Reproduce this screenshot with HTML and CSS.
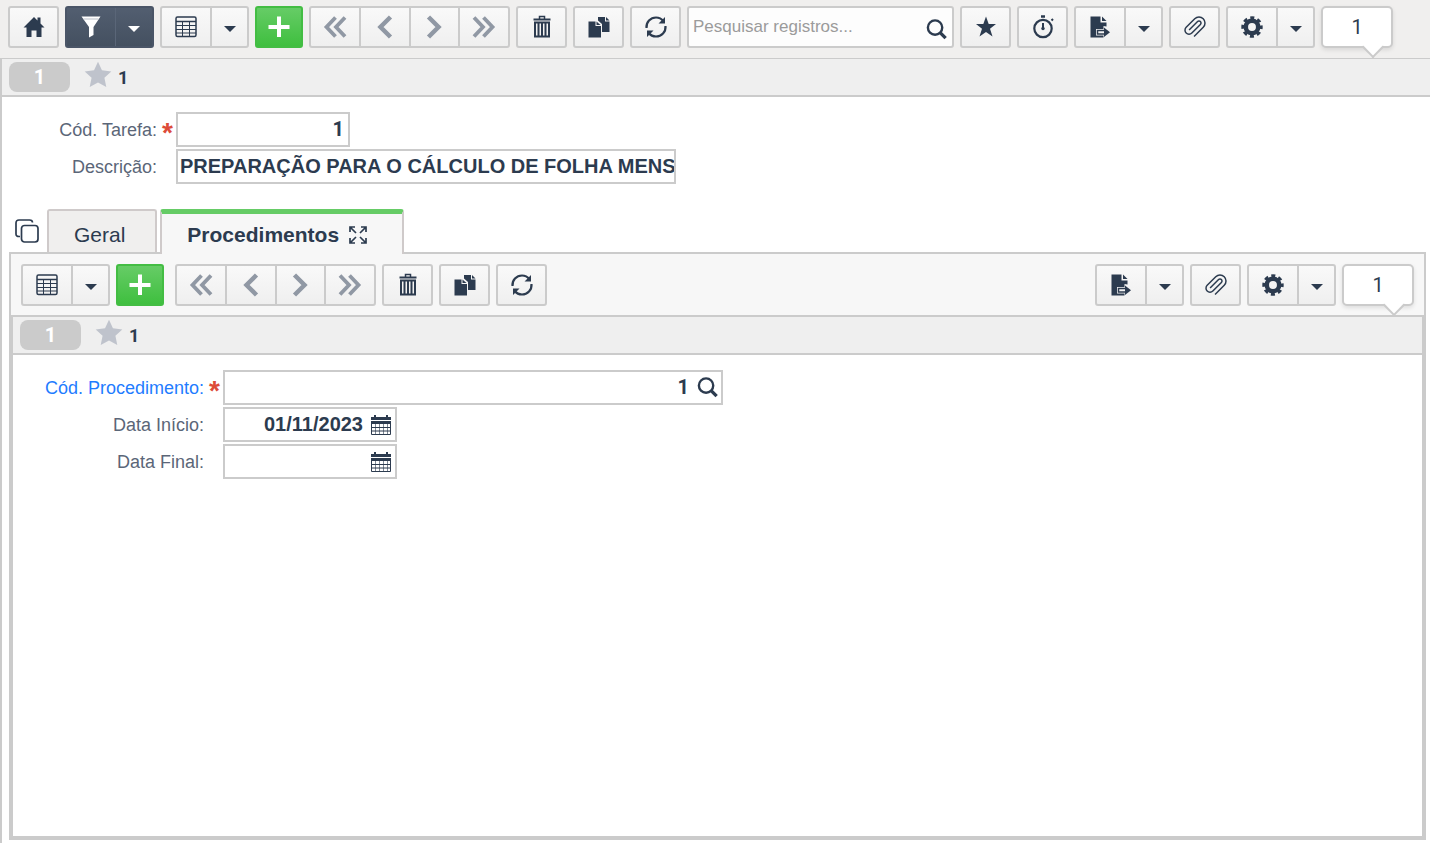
FILE: index.html
```html
<!DOCTYPE html>
<html lang="pt-BR">
  <head>
    <meta charset="UTF-8" />
    <meta name="viewport" content="width=device-width, initial-scale=1.0" />
    <title>Tarefas</title>
    <link rel="stylesheet" href="styles.css">
  </head>
  <body>
    <svg class="sprite" aria-hidden="true">
      <symbol id="i-home" viewBox="0 0 24 24">
        <path fill="currentColor" d="M12 2 1.500 12.500h3V22h5v-6.500h5V22h5v-9.500h3L18.500 8.500V2.500h-3v3z" />
      </symbol>
      <symbol id="i-filter" viewBox="0 0 24 24">
        <path fill="currentColor" d="M2.500 1.500h19L14.500 12v8l-4.500 2.500V12z" />
        <path stroke="#b9bfc8" d="M4.500 4h15" />
      </symbol>
      <symbol id="i-grid" viewBox="0 0 24 24" fill="none" stroke="currentColor">
        <rect x="2" y="2" width="20" height="19.500" rx="1.500" stroke-width="1.500" />
        <path stroke-width="1.500" d="M2 6.500h20" />
        <path d="M2 10.500h20M2 14.500h20M2 18h20M8.500 7v14M15.500 7v14" />
      </symbol>
      <symbol id="i-caret" viewBox="0 0 12 6">
        <path fill="currentColor" d="M0 0h12L6 6z" />
      </symbol>
      <symbol id="i-plus" viewBox="0 0 24 24">
        <path stroke="currentColor" stroke-width="4" d="M12 1.500v20.500M1.500 12h21" />
      </symbol>
      <symbol id="i-first" viewBox="0 0 24 24" fill="none" stroke="currentColor" stroke-width="3.800">
        <path d="M12.500 2.500 3.500 12l9 9.500M22 2.500 13 12l9 9.500" />
      </symbol>
      <symbol id="i-prev" viewBox="0 0 24 24" fill="none" stroke="currentColor" stroke-width="4.500">
        <path d="M17.500 2 7.500 12l10 10" />
      </symbol>
      <symbol id="i-next" viewBox="0 0 24 24" fill="none" stroke="currentColor" stroke-width="4.500">
        <path d="m6.500 2 10 10-10 10" />
      </symbol>
      <symbol id="i-last" viewBox="0 0 24 24" fill="none" stroke="currentColor" stroke-width="3.800">
        <path d="M2 2.500 11 12l-9 9.500M11.500 2.500l9 9.500-9 9.500" />
      </symbol>
      <symbol id="i-trash" viewBox="0 0 24 24" fill="none" stroke="currentColor">
        <path stroke-width="1.500" d="M9.500 4V1.500h5V4" />
        <path stroke-width="2" d="M3.500 4.500h17" />
        <path stroke-width="2" d="M5 7.500h14v14H5z" />
        <path stroke-width="2" d="M8.500 8v13M12 8v13M15.500 8v13" />
      </symbol>
      <symbol id="i-copy" viewBox="0 0 24 24" fill="currentColor">
        <path d="M11 2h7v4.500h4.500V17H15V9l-4-3.500z" />
        <path d="M19 2l3.500 3.500H19z" />
        <path d="M1.500 6.500h7V11H14v11.500H1.500z" />
        <path d="M9.500 6.500 13.500 10h-4z" />
      </symbol>
      <symbol id="i-refresh" viewBox="0 0 24 24" fill="none" stroke="currentColor" stroke-width="2.200">
        <path d="M2.500 13C2 7 6.500 2.500 12 2.500c3 0 5.500 1.200 7.200 3.500M21.500 11c.5 6-4 10.500-9.500 10.500-3 0-5.500-1.200-7.200-3.500" />
        <path fill="currentColor" stroke="none" d="M21 2v6.500h-6.500zM3 22v-6.500h6.500z" />
      </symbol>
      <symbol id="i-search" viewBox="0 0 24 24" fill="none" stroke="currentColor">
        <circle cx="10.500" cy="10" r="7.500" stroke-width="2.500" />
        <path stroke-width="3.500" d="m15.500 15 6 6" />
      </symbol>
      <symbol id="i-star" viewBox="0 0 24 24">
        <path fill="currentColor" d="m12 1.500 2.700 7.500H22l-6 4.800 2.500 7.700-6.500-4.500-6.500 4.500L8 13.800 2 9h7.300z" />
      </symbol>
      <symbol id="i-star-wide" viewBox="0 0 24 24">
        <path fill="currentColor" d="m12 .6 3.400 7.400 8 .9-5.900 5.500 1.600 7.900-7.100-3.900-7.100 3.900 1.600-7.900L.6 8.900l8-.9z" />
      </symbol>
      <symbol id="i-timer" viewBox="0 0 24 24" fill="none" stroke="currentColor">
        <circle cx="12" cy="13.500" r="8.700" stroke-width="2.200" />
        <path stroke-width="2.500" d="M10 1.500h4" />
        <path stroke-width="2" d="M12 8v6M20.500 5.500 22 4" />
        <circle cx="12" cy="13.500" r="1.700" fill="currentColor" stroke="none" />
      </symbol>
      <symbol id="i-export" viewBox="0 0 24 24" fill="currentColor">
        <path d="M2.500 1.500h10V7.500h6v4l-3-.5v3H8v6.500h7.500v2h-13z" />
        <path d="M14 1.500 18.500 6H14z" />
        <path fill="none" stroke="currentColor" stroke-width="1.500" d="M17 15.500H9.500V19H17" />
        <path d="m16 12.500 6 4.750-6 4.750z" />
      </symbol>
      <symbol id="i-clip" viewBox="0 0 24 24" fill="none" stroke="currentColor" stroke-width="1.500">
        <path transform="matrix(0 1 1 0 0 0)" d="m21.440 11.050-9.190 9.190a6 6 0 0 1-8.490-8.490l8.570-8.570A4 4 0 1 1 18 8.840l-8.590 8.570a2 2 0 0 1-2.830-2.830l8.490-8.480" />
      </symbol>
      <symbol id="i-gear" viewBox="0 0 24 24" fill="none" stroke="currentColor">
        <circle cx="12" cy="12" r="6.200" stroke-width="4.500" />
        <circle cx="12" cy="12" r="9.200" stroke-width="3" stroke-dasharray="4 3.226" stroke-dashoffset="2" />
      </symbol>
      <symbol id="i-windows" viewBox="0 0 24 24" fill="none" stroke="currentColor" stroke-width="1.700">
        <path d="M5 17.500H4C2 17.500 1 16.500 1 15V4c0-2 1-3 3-3h10.500c1.800 0 3 1 3 2.500" />
        <rect x="6.500" y="6.500" width="16.500" height="16.500" rx="3" />
      </symbol>
      <symbol id="i-expand" viewBox="0 0 20 20" fill="none" stroke="currentColor" stroke-width="1.700">
        <path d="M7 2H2v5M13 2h5v5M7 18H2v-5M13 18h5v-5M2 2l6 6M18 2l-6 6M2 18l6-6M18 18l-6-6" />
      </symbol>
      <symbol id="i-calendar" viewBox="0 0 20 20" fill="none" stroke="currentColor">
        <path fill="currentColor" stroke="none" d="M0 2h3V0h2v2h10V0h2v2h3v3H0zM0 6h20v3H0z" />
        <path d="M.5 8v11.500h19V8M0 12.500h20M0 16h20" />
        <path stroke-opacity=".6" d="M4.500 8v11M8.500 8v11M12.500 8v11M16.500 8v11" />
      </symbol>
    </svg>

    <header class="toolbar toolbar-main">
      <button class="btn" aria-label="Início"><svg class="icon"><use href="#i-home" /></svg></button>
      <div class="group split dark">
        <button aria-label="Filtro"><svg class="icon"><use href="#i-filter" /></svg></button>
        <button aria-label="Opções de filtro"><svg class="caret"><use href="#i-caret" /></svg></button>
      </div>
      <div class="group split">
        <button aria-label="Grade"><svg class="icon"><use href="#i-grid" /></svg></button>
        <button aria-label="Opções da grade"><svg class="caret"><use href="#i-caret" /></svg></button>
      </div>
      <button class="btn add" aria-label="Adicionar"><svg class="icon"><use href="#i-plus" /></svg></button>
      <div class="group nav">
        <button aria-label="Primeiro"><svg class="icon"><use href="#i-first" /></svg></button>
        <button aria-label="Anterior"><svg class="icon"><use href="#i-prev" /></svg></button>
        <button aria-label="Próximo"><svg class="icon"><use href="#i-next" /></svg></button>
        <button aria-label="Último"><svg class="icon"><use href="#i-last" /></svg></button>
      </div>
      <button class="btn" aria-label="Excluir"><svg class="icon"><use href="#i-trash" /></svg></button>
      <button class="btn" aria-label="Duplicar"><svg class="icon"><use href="#i-copy" /></svg></button>
      <button class="btn" aria-label="Atualizar"><svg class="icon"><use href="#i-refresh" /></svg></button>
      <div class="search">
        <input type="text" placeholder="Pesquisar registros..." aria-label="Pesquisar registros" />
        <button aria-label="Pesquisar"><svg class="icon"><use href="#i-search" /></svg></button>
      </div>
      <button class="btn" aria-label="Favoritos"><svg class="icon"><use href="#i-star" /></svg></button>
      <button class="btn" aria-label="Cronômetro"><svg class="icon"><use href="#i-timer" /></svg></button>
      <div class="group split">
        <button aria-label="Exportar"><svg class="icon"><use href="#i-export" /></svg></button>
        <button aria-label="Opções de exportação"><svg class="caret"><use href="#i-caret" /></svg></button>
      </div>
      <button class="btn" aria-label="Anexos"><svg class="icon"><use href="#i-clip" /></svg></button>
      <div class="group split">
        <button aria-label="Configurações"><svg class="icon"><use href="#i-gear" /></svg></button>
        <button aria-label="Mais configurações"><svg class="caret"><use href="#i-caret" /></svg></button>
      </div>
      <div class="counter">1</div>
    </header>

    <main class="page">
      <div class="record-bar">
        <span class="badge">1</span>
        <svg class="star"><use href="#i-star-wide" /></svg>
        <span class="record-title">1</span>
      </div>

      <form class="fields">
        <div class="row">
          <label for="codTarefa">Cód. Tarefa:</label>
          <span class="required">*</span>
          <div class="field short"><input class="number code" type="text" id="codTarefa" value="1" /></div>
        </div>
        <div class="row">
          <label for="descricao">Descrição:</label>
          <span class="required"></span>
          <div class="field long"><input class="text" type="text" id="descricao" value="PREPARAÇÃO PARA O CÁLCULO DE FOLHA MENS" /></div>
        </div>
      </form>

      <nav class="tabs">
        <button class="windows" aria-label="Abas"><svg class="icon"><use href="#i-windows" /></svg></button>
        <button class="tab">Geral</button>
        <button class="tab active">Procedimentos <svg class="expand"><use href="#i-expand" /></svg></button>
      </nav>

      <section class="panel">
        <div class="toolbar toolbar-inner">
          <div class="group split">
            <button aria-label="Grade"><svg class="icon"><use href="#i-grid" /></svg></button>
            <button aria-label="Opções da grade"><svg class="caret"><use href="#i-caret" /></svg></button>
          </div>
          <button class="btn add" aria-label="Adicionar"><svg class="icon"><use href="#i-plus" /></svg></button>
          <div class="group nav">
            <button aria-label="Primeiro"><svg class="icon"><use href="#i-first" /></svg></button>
            <button aria-label="Anterior"><svg class="icon"><use href="#i-prev" /></svg></button>
            <button aria-label="Próximo"><svg class="icon"><use href="#i-next" /></svg></button>
            <button aria-label="Último"><svg class="icon"><use href="#i-last" /></svg></button>
          </div>
          <button class="btn" aria-label="Excluir"><svg class="icon"><use href="#i-trash" /></svg></button>
          <button class="btn" aria-label="Duplicar"><svg class="icon"><use href="#i-copy" /></svg></button>
          <button class="btn" aria-label="Atualizar"><svg class="icon"><use href="#i-refresh" /></svg></button>
          <div class="spacer"></div>
          <div class="group split">
            <button aria-label="Exportar"><svg class="icon"><use href="#i-export" /></svg></button>
            <button aria-label="Opções de exportação"><svg class="caret"><use href="#i-caret" /></svg></button>
          </div>
          <button class="btn" aria-label="Anexos"><svg class="icon"><use href="#i-clip" /></svg></button>
          <div class="group split">
            <button aria-label="Configurações"><svg class="icon"><use href="#i-gear" /></svg></button>
            <button aria-label="Mais configurações"><svg class="caret"><use href="#i-caret" /></svg></button>
          </div>
          <div class="counter">1</div>
        </div>

        <div class="detail">
          <div class="record-bar">
            <span class="badge">1</span>
            <svg class="star"><use href="#i-star-wide" /></svg>
            <span class="record-title">1</span>
          </div>

          <form class="fields">
            <div class="row">
              <label class="link" for="codProcedimento">Cód. Procedimento:</label>
              <span class="required">*</span>
              <div class="field long">
                <input class="number code" type="text" id="codProcedimento" value="1" />
                <button type="button" aria-label="Pesquisar procedimento"><svg class="icon"><use href="#i-search" /></svg></button>
              </div>
            </div>
            <div class="row">
              <label for="dataInicio">Data Início:</label>
              <span class="required"></span>
              <div class="field short">
                <input class="number" type="text" id="dataInicio" value="01/11/2023" />
                <button type="button" aria-label="Abrir calendário"><svg class="calendar"><use href="#i-calendar" /></svg></button>
              </div>
            </div>
            <div class="row">
              <label for="dataFinal">Data Final:</label>
              <span class="required"></span>
              <div class="field short">
                <input class="number" type="text" id="dataFinal" />
                <button type="button" aria-label="Abrir calendário"><svg class="calendar"><use href="#i-calendar" /></svg></button>
              </div>
            </div>
          </form>
        </div>
      </section>
    </main>
  </body>
</html>
```
FILE: styles.css
```css
* {
  box-sizing: border-box;
  margin: 0;
  padding: 0;
}

body {
  font-family: "Liberation Sans", Arial, sans-serif;
  font-size: 18px;
  color: #2c3b4f;
  background-color: #f0efee;
  min-height: 100vh;
  display: flex;
  flex-direction: column;
}

button,
input {
  font: inherit;
  color: inherit;
  border: none;
  background: none;
}

button {
  display: flex;
  align-items: center;
  justify-content: center;
  cursor: pointer;
}

.sprite {
  display: none;
}

.icon {
  width: 24px;
  height: 24px;
}

.caret {
  width: 12px;
  height: 6px;
  margin-top: 3px;
}

/* Barras de ferramentas */
.toolbar {
  display: flex;
  gap: 6px;
}

.toolbar-main {
  padding: 6px 37px 10px 8px;
}

.toolbar-inner {
  padding: 10px 10px 9px;
}

.btn,
.group {
  flex: none;
  height: 42px;
  border: 2px solid #cbcbcb;
  border-radius: 3px;
  background: linear-gradient(#f9f9f9, #efefef);
}

.btn {
  width: 51px;
}

.group {
  display: flex;
}

.group button + button {
  border-left: 2px solid #cbcbcb;
}

.split {
  width: 89px;
}

.split button {
  width: 48px;
}

.split button + button {
  width: 37px;
}

.dark {
  color: #fff;
  border-color: #4a5567;
  background: linear-gradient(#525e70, #445060);
}

.dark button + button {
  border-left: 1px solid #5a6678;
}

.add {
  width: 48px;
  color: #fff;
  border-color: #43bd43;
  background: linear-gradient(#66cc66, #3fbf3f);
}

.toolbar-inner .add {
  margin-right: 5px;
}

.nav {
  width: 201px;
  color: #9098a4;
}

.nav button {
  flex: 1;
}

.search {
  flex: 1;
  display: flex;
  min-width: 120px;
  height: 42px;
  border: 2px solid #cbcbcb;
  border-radius: 3px;
  background: #fdfdfd;
}

.search input {
  flex: 1;
  min-width: 0;
  padding: 0 4px;
  font-size: 17px;
  outline: none;
}

.search input::placeholder {
  color: #9b9b9b;
}

.search button {
  width: 32px;
  padding-top: 4px;
}

.search .icon,
.field .icon {
  width: 23px;
  height: 23px;
}

.spacer {
  flex: 1;
}

.counter {
  position: relative;
  flex: none;
  width: 72px;
  height: 42px;
  border: 2px solid #cbcbcb;
  border-radius: 5px;
  background: #fff;
  box-shadow: 0 2px 4px rgba(0, 0, 0, 0.1);
  font-family: Roboto, sans-serif;
  font-size: 20px;
  line-height: 38px;
  text-align: center;
}

.counter::after {
  content: "";
  position: absolute;
  right: 10px;
  bottom: -9px;
  width: 14px;
  height: 14px;
  border: solid #cbcbcb;
  border-width: 0 2px 2px 0;
  background: linear-gradient(135deg, transparent 50%, #fff 50%);
  transform: rotate(45deg);
}

/* Registro */
.page {
  flex: 1;
  display: flex;
  flex-direction: column;
  border-top: 1px solid #cbcbcb;
  border-left: 2px solid #cbcbcb;
  background: #fff;
}

.record-bar {
  display: flex;
  align-items: center;
  height: 38px;
  padding: 0 7px;
  border-bottom: 2px solid #cbcbcb;
  background: #efefef;
  font-family: Roboto, sans-serif;
  font-weight: bold;
}

.badge {
  width: 61px;
  height: 30px;
  border-radius: 8px;
  background: #cbcbcb;
  color: #fff;
  font-size: 20px;
  line-height: 30px;
  text-align: center;
}

.star {
  width: 28px;
  height: 28px;
  margin: 0 6px 4px 14px;
  color: #bfc3cc;
}

.fields {
  display: flex;
  flex-direction: column;
  gap: 2px;
  padding: 15px 0;
}

.row {
  display: flex;
  align-items: center;
}

.row label {
  width: 155px;
  padding-top: 2px;
  color: #5b6678;
  text-align: right;
}

.detail .row label {
  width: 191px;
}

.row .link {
  color: #1f7cff;
}

.required {
  width: 19px;
  height: 24px;
  padding-left: 2px;
  color: #dd4b39;
  font-size: 28px;
  font-weight: bold;
  line-height: 30px;
  text-align: center;
}

.field {
  display: flex;
  height: 35px;
  border: 2px solid #cbcbcb;
  background: #fff;
}

.field input {
  flex: 1;
  min-width: 0;
  padding: 0 4px 1px;
  font-size: 20px;
  font-weight: bold;
  outline: none;
}

.field .text {
  padding: 0 0 1px 2px;
}

.field .number {
  text-align: right;
}

.field .code {
  font-family: Roboto, sans-serif;
}

.field button {
  width: 28px;
}

.calendar {
  width: 20px;
  height: 20px;
}

.short {
  width: 174px;
}

.long {
  width: 500px;
}

/* Abas */
.tabs {
  display: flex;
  align-items: flex-end;
  margin-top: 10px;
  padding-left: 13px;
}

.windows {
  height: 43px;
  margin-right: 8px;
}

.tab {
  height: 43px;
  margin-right: 3px;
  padding: 6px 30px 0 25px;
  border: 2px solid #cfcaca;
  border-bottom: none;
  border-radius: 3px 3px 0 0;
  background: #f0efee;
  font-size: 21px;
}

.active {
  position: relative;
  height: 45px;
  margin-bottom: -2px;
  padding: 2px 34px 0 25px;
  border-top: 5px solid #66cc66;
  background: #f7f7f7;
  font-weight: bold;
}

.expand {
  width: 20px;
  height: 20px;
  margin-left: 9px;
}

.panel {
  flex: 1;
  display: flex;
  flex-direction: column;
  margin: 0 4px 3px 7px;
  border: 2px solid #cbcbcb;
  background: #f7f7f7;
}

.detail {
  flex: 1;
  border: 2px solid #cbcbcb;
  background: #fff;
}
```
